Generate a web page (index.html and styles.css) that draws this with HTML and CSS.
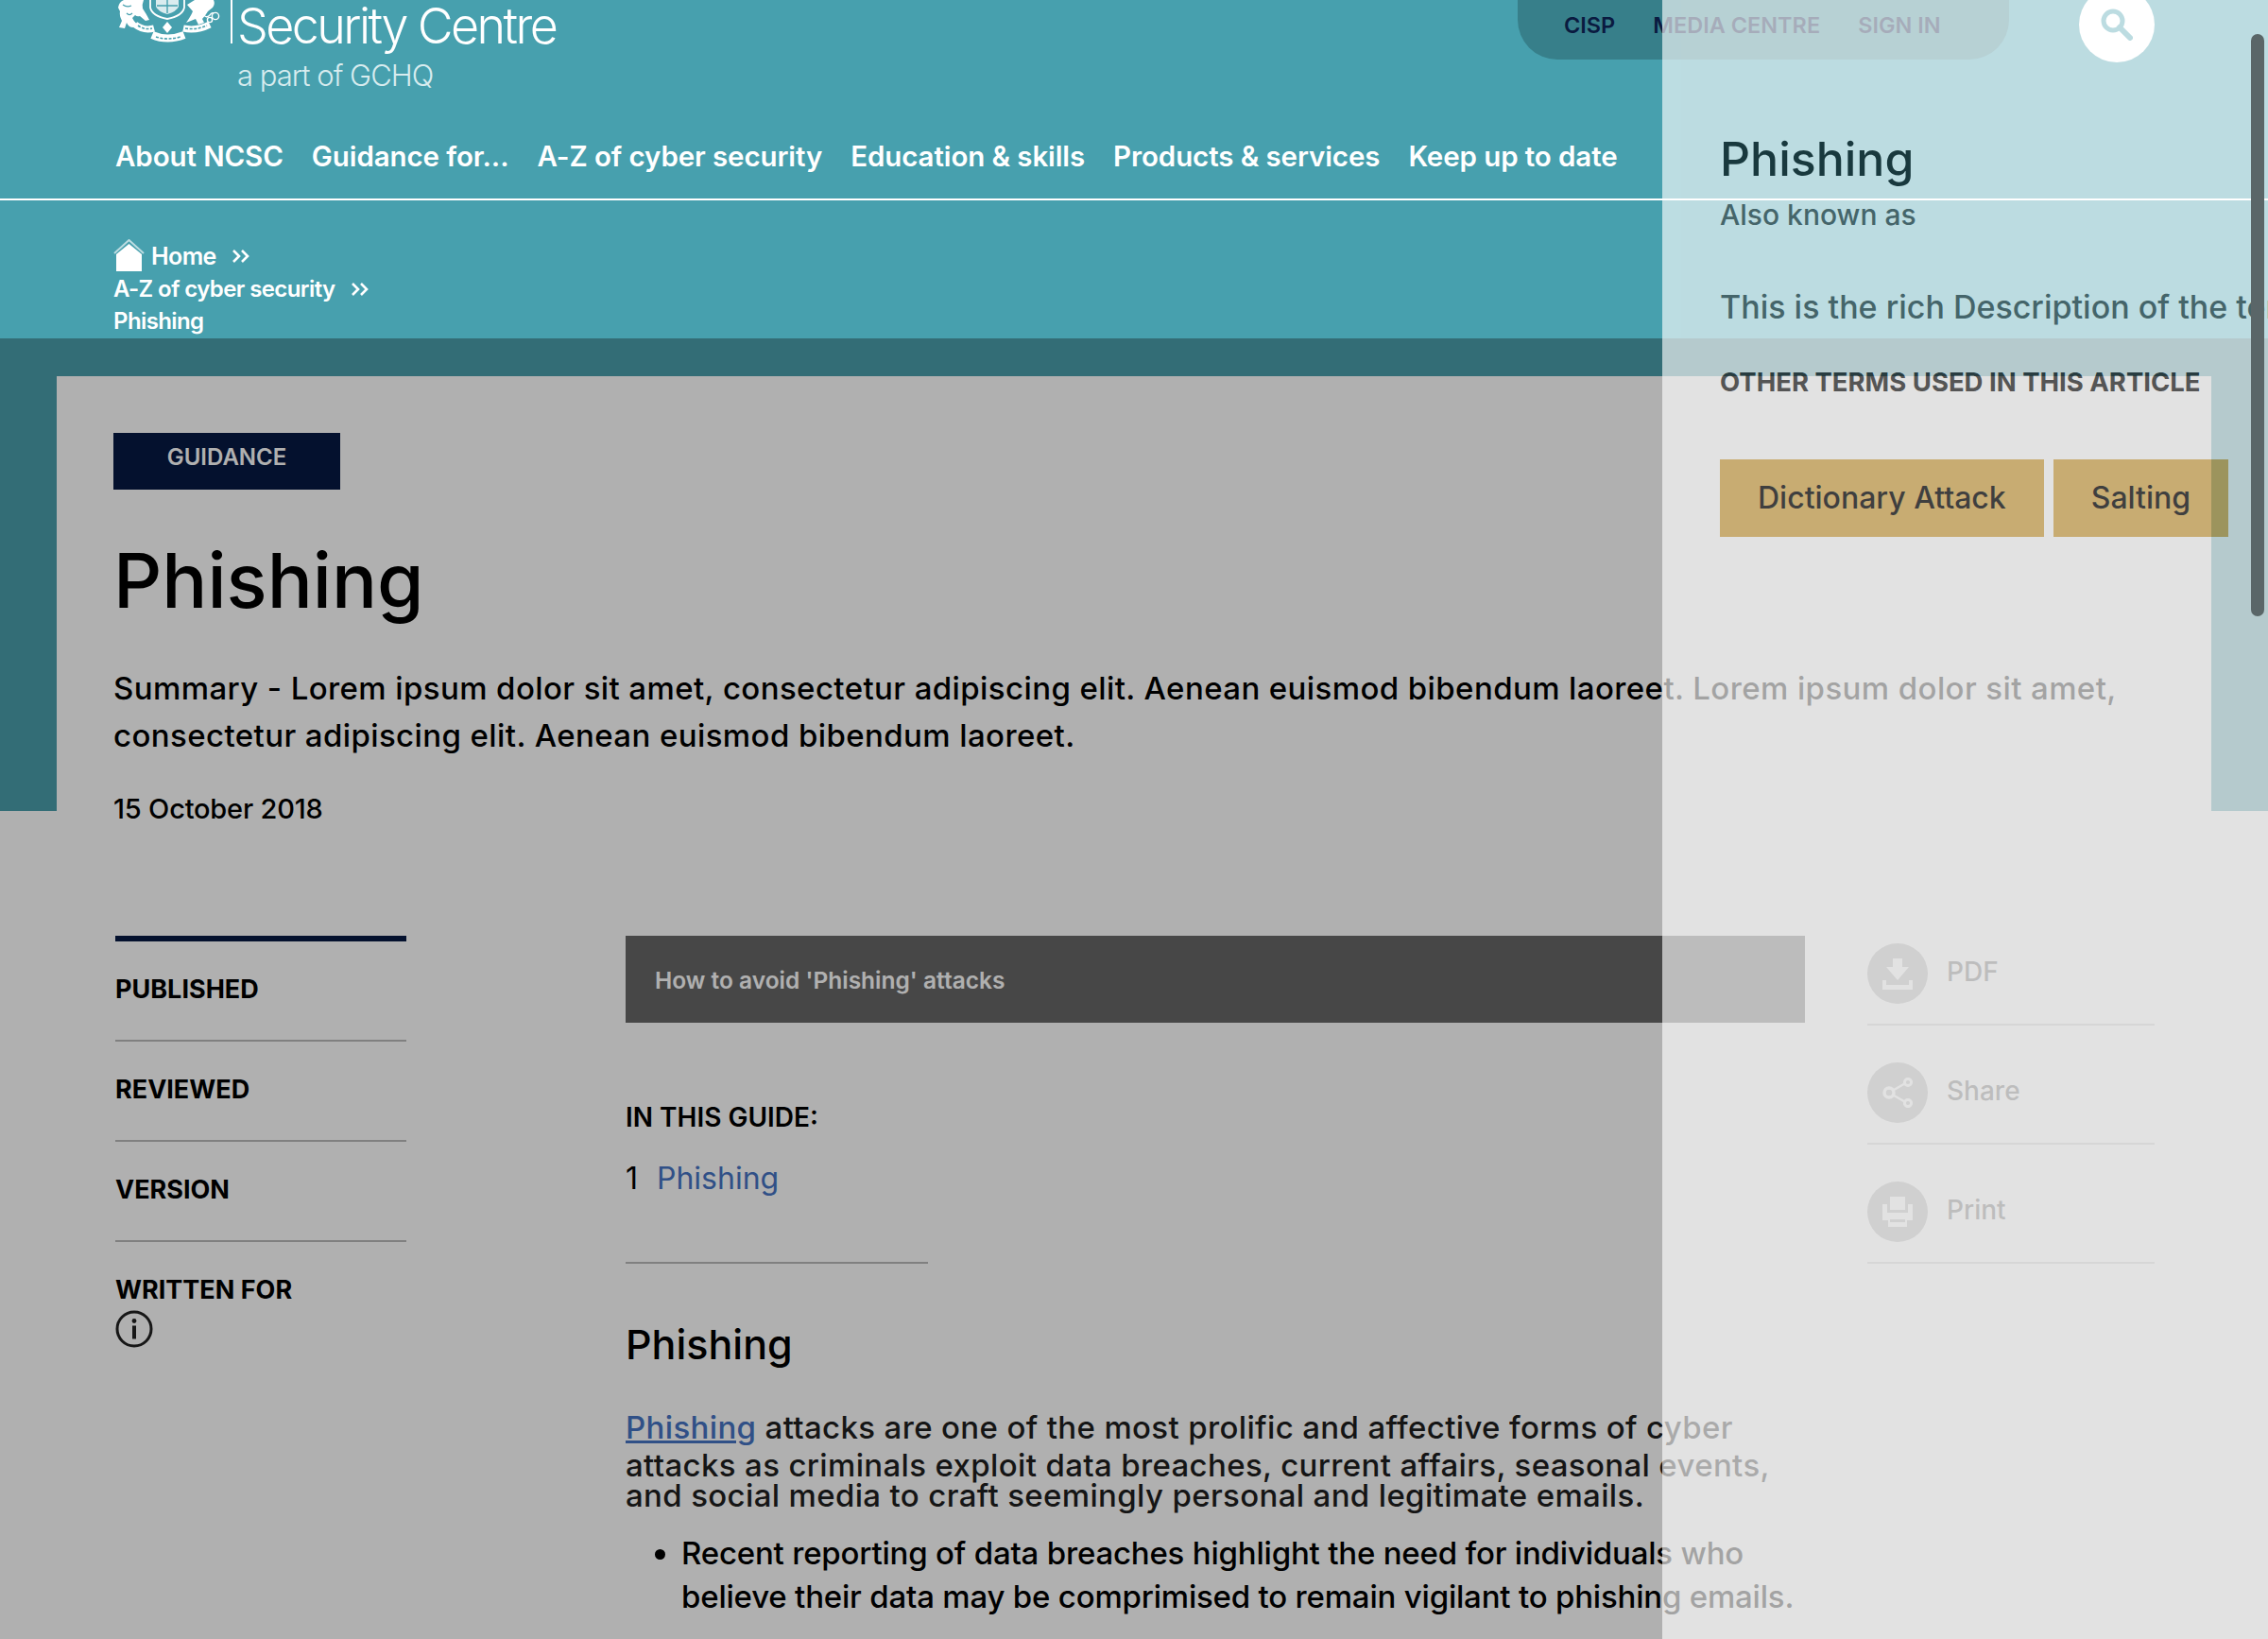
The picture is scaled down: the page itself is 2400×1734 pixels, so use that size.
FILE: index.html
```html
<!DOCTYPE html>
<html lang="en">
<head>
    <meta charset="UTF-8">
    <meta name="viewport" content="width=device-width, initial-scale=1.0">
    <title>Phishing - NCSC</title>
    <link rel="stylesheet" href="styles.css">
</head>
<body>
    <header class="site-header">
        <div class="top-row">
            <a class="logo">
                <svg class="crest" viewBox="0 0 115 46" aria-hidden="true">
                    <!-- lion -->
                    <path fill="#fff" d="M3 8 Q4 2 9 0 H30 Q28 5 29 9 Q33 15 36 21 L32 22 L26 17 Q23 18 21 16 L18 19 Q21 25 25 26 L19 29 Q14 29 12 24 L10 30 L4 29 L7 22 Q4 16 5 12 Z"/>
                    <path fill="none" stroke="#47a0ae" stroke-width="1.2" d="M8 5 Q12 8 17 6 M12 14 Q15 17 18 14"/>
                    <!-- shield and garter -->
                    <path fill="none" stroke="#fff" stroke-width="1.8" d="M37 0 V8 Q39 17 55 20 Q71 17 73 8 V0"/>
                    <path fill="#fff" opacity="0.8" d="M43 0 H67 V7 Q65 12 55 15 Q45 12 43 7 Z"/>
                    <path fill="none" stroke="#47a0ae" stroke-width="1.4" d="M55 0 V14 M44 6 H66"/>
                    <!-- unicorn -->
                    <path fill="#fff" d="M76 5 L84 0 H104 Q106 4 103 8 L98 12 Q95 17 92 20 L94 24 L88 26 L85 20 L80 22 L75 24 Q80 17 82 12 Z"/>
                    <circle cx="106" cy="17" r="3.6" fill="none" stroke="#fff" stroke-width="1.4"/>
                    <circle cx="100" cy="21" r="2.6" fill="none" stroke="#fff" stroke-width="1.4"/>
                    <path fill="none" stroke="#fff" stroke-width="1.4" d="M93 15 Q96 20 100 16 Q102 13 104 14"/>
                    <!-- motto ribbons -->
                    <path fill="none" stroke="#fff" stroke-width="7" d="M21 26 Q30 33 41 30"/>
                    <path fill="none" stroke="#fff" stroke-width="7" d="M72 30 Q86 33 100 26"/>
                    <path fill="none" stroke="#fff" stroke-width="8" d="M39 37 Q55 44 73 37"/>
                    <path fill="#fff" d="M55 23 L60 29 L55 35 L50 29 Z"/>
                    <path fill="none" stroke="#47a0ae" stroke-width="1.6" stroke-dasharray="3 1.6" d="M24 27 Q31 32 39 30 M74 30 Q86 32 97 27 M43 39 Q55 43 69 39"/>
                </svg>
                <span class="logo-divider"></span>
                <span class="logo-text">
                    <span class="logo-name">Security Centre</span>
                    <span class="logo-sub">a part of GCHQ</span>
                </span>
            </a>
            <div class="top-tools">
                <div class="utility-pill">
                    <a>CISP</a>
                    <a>MEDIA CENTRE</a>
                    <a>SIGN IN</a>
                </div>
                <div class="search-btn">
                    <svg viewBox="0 0 34 34" width="34" height="34" aria-hidden="true">
                        <circle cx="13" cy="13" r="10" fill="none" stroke="#47a0ae" stroke-width="5"/>
                        <path d="M20 20 L31 31" stroke="#47a0ae" stroke-width="6" stroke-linecap="round"/>
                    </svg>
                </div>
            </div>
        </div>
        <nav class="main-nav">
            <a>About NCSC</a>
            <a>Guidance for...</a>
            <a>A-Z of cyber security</a>
            <a>Education &amp; skills</a>
            <a>Products &amp; services</a>
            <a>Keep up to date</a>
        </nav>
        <div class="breadcrumb">
            <div class="crumb">
                <svg class="home-icon" viewBox="0 0 33 34" aria-hidden="true">
                    <path d="M1 15 L16.5 1 L32 15" fill="none" stroke="#bcdce1" stroke-width="2"/>
                    <path d="M3 34 V16 L16.5 5 L30 16 V34 Z" fill="#fff"/>
                </svg>
                <a class="home-link">Home</a>
                <svg class="crumb-sep" viewBox="0 0 20 16" aria-hidden="true">
                    <path d="M2 2 L8 8 L2 14 M11 2 L17 8 L11 14" fill="none" stroke="#fff" stroke-width="2.6"/>
                </svg>
            </div>
            <div class="crumb">
                <a>A-Z of cyber security</a>
                <svg class="crumb-sep" viewBox="0 0 20 16" aria-hidden="true">
                    <path d="M2 2 L8 8 L2 14 M11 2 L17 8 L11 14" fill="none" stroke="#fff" stroke-width="2.6"/>
                </svg>
            </div>
            <div class="crumb"><a>Phishing</a></div>
        </div>
    </header>

    <section class="hero">
        <div class="hero-card">
            <div class="badge">GUIDANCE</div>
            <h1>Phishing</h1>
            <p class="summary">Summary - Lorem ipsum dolor sit amet, consectetur adipiscing elit. Aenean euismod bibendum laoreet. Lorem ipsum dolor sit amet,<br>consectetur adipiscing elit. Aenean euismod bibendum laoreet.</p>
            <p class="date">15 October 2018</p>
        </div>
    </section>

    <section class="content">
        <aside class="meta-list">
            <div class="meta-item">PUBLISHED</div>
            <div class="meta-item">REVIEWED</div>
            <div class="meta-item">VERSION</div>
            <div class="meta-item last">
                WRITTEN FOR
                <svg class="info-icon" viewBox="0 0 40 40" aria-hidden="true">
                    <circle cx="20" cy="20" r="18" fill="none" stroke="#222" stroke-width="3"/>
                    <circle cx="20" cy="11.5" r="2.4" fill="#222"/>
                    <rect x="18" y="16.5" width="4" height="14" fill="#222"/>
                </svg>
            </div>
        </aside>

        <article class="article">
            <div class="guide-bar">How to avoid 'Phishing' attacks</div>
            <div class="guide-title">IN THIS GUIDE:</div>
            <div class="guide-row"><span class="guide-num">1</span><a class="link">Phishing</a></div>
            <div class="short-rule"></div>
            <h2>Phishing</h2>
            <p class="intro"><a class="link underlined">Phishing</a> attacks are one of the most prolific and affective forms of cyber<br>attacks as criminals exploit data breaches, current affairs, seasonal events,<br>and social media to craft seemingly personal and legitimate emails.</p>
            <ul class="points">
                <li>Recent reporting of data breaches highlight the need for individuals who<br>believe their data may be comprimised to remain vigilant to phishing emails.</li>
            </ul>
        </article>

        <aside class="actions">
            <div class="action">
                <span class="action-icon">
                    <svg viewBox="0 0 32 33" width="32" height="33" aria-hidden="true">
                        <path d="M11 0 H21 V9 H28 L16 23 L4 9 H11 Z" fill="#fff"/>
                        <path d="M0 23 H4 V28 H28 V23 H32 V33 H0 Z" fill="#fff"/>
                    </svg>
                </span>
                <span class="action-label">PDF</span>
            </div>
            <div class="action">
                <span class="action-icon">
                    <svg viewBox="0 0 32 32" width="32" height="32" aria-hidden="true">
                        <path d="M7 16 L26 5 M7 16 L26 27" stroke="#fff" stroke-width="2.5"/>
                        <circle cx="7" cy="16" r="5" fill="#b5b5b5" stroke="#fff" stroke-width="3.5"/>
                        <circle cx="27" cy="5" r="3.6" fill="#b5b5b5" stroke="#fff" stroke-width="3"/>
                        <circle cx="27" cy="27" r="3.6" fill="#b5b5b5" stroke="#fff" stroke-width="3"/>
                    </svg>
                </span>
                <span class="action-label">Share</span>
            </div>
            <div class="action">
                <span class="action-icon">
                    <svg viewBox="0 0 32 32" width="32" height="32" aria-hidden="true">
                        <path d="M8 0 H24 V14 H8 Z" fill="#fff"/>
                        <path d="M0 8 H5 V17 H27 V8 H32 V25 H26 V32 H6 V25 H0 Z" fill="#fff"/>
                        <rect x="8" y="24" width="16" height="3" fill="#b5b5b5"/>
                    </svg>
                </span>
                <span class="action-label">Print</span>
            </div>
        </aside>
    </section>

    <div class="page-dim"></div>

    <aside class="drawer">
        <h2 class="drawer-title">Phishing</h2>
        <div class="drawer-aka">Also known as</div>
        <p class="drawer-desc">This is the rich Description of the term</p>
        <div class="drawer-label">OTHER TERMS USED IN THIS ARTICLE</div>
        <div class="drawer-tags">
            <a class="tag">Dictionary Attack</a>
            <a class="tag">Salting</a>
        </div>
    </aside>
    <div class="drawer-scroll"></div>
</body>
</html>
```

FILE: styles.css
```css
html, body {
    margin: 0;
    height: 1734px;
    overflow: hidden;
}

body {
    position: relative;
    font-family: 'Inter', 'Liberation Sans', sans-serif;
    background-color: #fff;
    color: #000;
}

p, h1, h2, ul {
    margin: 0;
}

/* header sits above the dim layer, that is why it stays bright */
.site-header {
    position: relative;
    z-index: 2;
    height: 358px;
    background-color: #47a0ae;
    color: #fff;
}

.top-row {
    display: flex;
    justify-content: space-between;
    height: 135px;
    padding: 0 120px 0 122px;
    box-sizing: border-box;
}

.logo {
    display: flex;
    align-items: flex-start;
}

.crest {
    width: 115px;
    height: 46px;
}

.logo-divider {
    width: 2px;
    height: 46px;
    margin: 0 5px 0 7px;
    background-color: #fff;
}

.logo-text {
    display: flex;
    flex-direction: column;
}

.logo-name {
    font-weight: 300;
    font-size: 52px;
    line-height: 56px;
    letter-spacing: -2.6px;
}

.logo-sub {
    margin-top: 6px;
    font-weight: 300;
    font-size: 31px;
    line-height: 36px;
    letter-spacing: -1px;
    color: #d8ecef;
}

.top-tools {
    display: flex;
    align-items: flex-start;
    gap: 74px;
}

.utility-pill {
    display: flex;
    align-items: center;
    gap: 40px;
    height: 63px;
    width: 520px;
    padding: 0 0 10px 49px;
    box-sizing: border-box;
    border-radius: 0 0 42px 42px;
    background-color: #377f8a;
    color: #0a1a40;
    font-weight: 600;
    font-size: 23.5px;
}

.search-btn {
    display: flex;
    align-items: center;
    justify-content: center;
    width: 80px;
    height: 80px;
    margin-top: -14px;
    border-radius: 50%;
    background-color: #fff;
}

.main-nav {
    display: flex;
    gap: 30px;
    padding: 0 0 15px 122px;
    border-bottom: 2px solid #fff;
    font-weight: 600;
    font-size: 29.5px;
    line-height: 60px;
    letter-spacing: -0.1px;
}

.breadcrumb {
    padding: 42px 0 0 120px;
    font-weight: 600;
    font-size: 24px;
    line-height: 34.5px;
    letter-spacing: -0.6px;
}

.crumb {
    display: flex;
    align-items: center;
    height: 34.5px;
}

.home-icon {
    width: 33px;
    height: 34px;
    margin: -3px 7px 0 0;
}

.home-link {
    font-size: 25px;
}

.crumb-sep {
    width: 20px;
    height: 16px;
    margin-left: 16px;
}

.hero {
    height: 460px;
    padding: 40px 60px 0;
    background-color: #4a9fac;
}

.hero-card {
    height: 400px;
    padding: 60px 60px 0;
    background-color: #fff;
}

.badge {
    display: flex;
    align-items: center;
    justify-content: center;
    width: 240px;
    height: 60px;
    padding-bottom: 10px;
    box-sizing: border-box;
    background-color: #071a43;
    color: #fff;
    font-weight: 600;
    font-size: 24px;
}

h1 {
    margin-top: 51px;
    font-weight: 500;
    font-size: 80px;
    line-height: 90px;
}

.summary {
    margin-top: 44px;
    font-weight: 500;
    font-size: 33px;
    line-height: 50px;
    letter-spacing: 0.4px;
    white-space: nowrap;
}

.date {
    margin-top: 33px;
    font-weight: 500;
    font-size: 29px;
    line-height: 40px;
    letter-spacing: -0.2px;
}

.content {
    display: grid;
    grid-template-columns: 474px 1248px 304px;
    column-gap: 66px;
    margin-top: 132px;
    padding-left: 122px;
}

.meta-list {
    margin-right: 166px;
    border-top: 6px solid #071a43;
}

.meta-item {
    height: 106px;
    padding-top: 30px;
    box-sizing: border-box;
    border-bottom: 2px solid #bababa;
    font-weight: 700;
    font-size: 27px;
    line-height: 41px;
}

.meta-item.last {
    border-bottom: none;
}

.info-icon {
    display: block;
    width: 40px;
    height: 40px;
    margin-top: 1px;
}

.guide-bar {
    height: 92px;
    padding-left: 31px;
    background-color: #686868;
    color: #fff;
    font-weight: 600;
    font-size: 24.5px;
    line-height: 94px;
}

.guide-title {
    margin-top: 80px;
    font-weight: 600;
    font-size: 28px;
    line-height: 40px;
}

.guide-row {
    display: flex;
    margin-top: 20px;
    font-size: 32px;
    line-height: 50px;
}

.guide-num {
    width: 33px;
}

.link {
    color: #4674c4;
}

.underlined {
    line-height: 48px;
    text-decoration: underline;
}

.short-rule {
    width: 320px;
    height: 2px;
    margin-top: 63px;
    background-color: #bababa;
}

.article h2 {
    margin-top: 55px;
    font-weight: 500;
    font-size: 43px;
    line-height: 60px;
}

.intro {
    margin-top: 34px;
    font-weight: 500;
    font-size: 33px;
    line-height: 32px;
    letter-spacing: 0.35px;
    color: #1f1f1f;
    white-space: nowrap;
}

.points {
    margin-top: 22px;
    padding-left: 59px;
    font-weight: 500;
    font-size: 33px;
    line-height: 46px;
    letter-spacing: -0.2px;
    white-space: nowrap;
}

.action {
    display: flex;
    align-items: center;
    gap: 20px;
    padding: 39px 0 21px;
    border-bottom: 2px solid #cdcdcd;
    color: #696969;
    font-weight: 500;
    font-size: 28px;
}

.action:first-child {
    padding-top: 8px;
}

.action-label {
    margin-top: -5px;
}

.action-icon {
    display: flex;
    align-items: center;
    justify-content: center;
    width: 64px;
    height: 64px;
    border-radius: 50%;
    background-color: #b5b5b5;
}

.page-dim {
    position: absolute;
    top: 0;
    left: 0;
    right: 0;
    bottom: 0;
    z-index: 1;
    background-color: rgba(0, 0, 0, 0.31);
}

.drawer {
    position: absolute;
    top: 0;
    right: 0;
    bottom: 0;
    z-index: 3;
    width: 641px;
    padding: 138px 0 0 61px;
    box-sizing: border-box;
    overflow: hidden;
    background-color: #fff;
    opacity: 0.64;
    white-space: nowrap;
}

.drawer-title {
    margin: 0;
    font-weight: 500;
    font-size: 50px;
    line-height: 60px;
}

.drawer-aka {
    margin-top: 9px;
    color: #454545;
    font-weight: 500;
    font-size: 30px;
    line-height: 40px;
}

.drawer-desc {
    margin-top: 53px;
    color: #454545;
    font-weight: 500;
    font-size: 34px;
    line-height: 50px;
}

.drawer-label {
    margin-top: 34px;
    color: #222;
    font-weight: 700;
    font-size: 27.5px;
    line-height: 40px;
}

.drawer-tags {
    display: flex;
    gap: 10px;
    margin-top: 62px;
}

.tag {
    padding: 0 40px;
    background-color: #d7aa50;
    font-weight: 500;
    font-size: 32px;
    line-height: 82px;
}

.drawer-scroll {
    position: absolute;
    top: 36px;
    right: 4px;
    z-index: 4;
    width: 14px;
    height: 616px;
    border-radius: 7px;
    background-color: #5a6668;
}
```
